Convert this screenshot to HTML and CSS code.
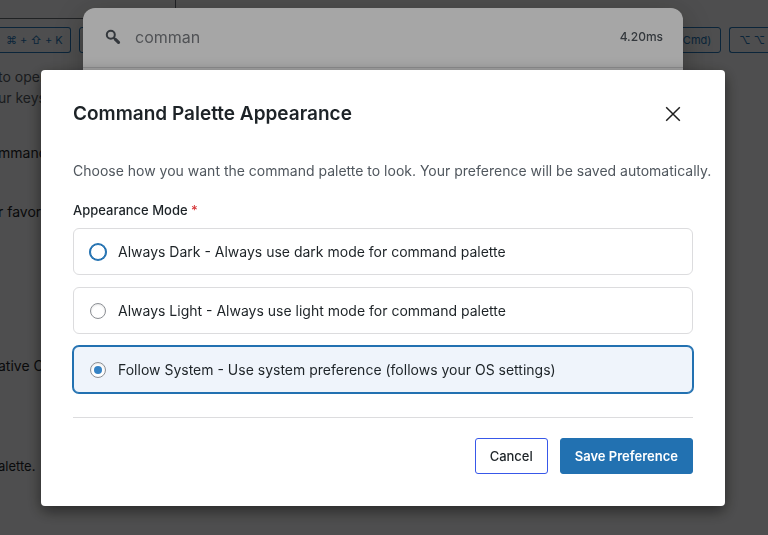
FILE: index.html
```html
<!DOCTYPE html>
<html lang="en">
<head>
    <meta charset="UTF-8">
    <meta name="viewport" content="width=device-width, initial-scale=1.0">
    <title>Command Palette Appearance</title>
    <link rel="stylesheet" href="styles.css">
</head>
<body>
    <main class="page">
        <div class="page-card"></div>
        <div class="shortcuts">
            <button type="button" class="shortcut shortcut-cut">⌘ + ⇧ + K</button>
            <button type="button" class="shortcut">⌘ K</button>
            <span class="spacer"></span>
            <button type="button" class="shortcut">(Cmd)</button>
            <button type="button" class="shortcut shortcut-last">⌥ ⌥ (</button>
        </div>
        <div class="page-text">
            <p class="intro">to open<br>ur keys</p>
            <p class="item">mmand</p>
            <p class="item">r favorit</p>
            <p class="item item-far">ative C</p>
            <p class="note">alette.</p>
        </div>
    </main>

    <div class="palette-overlay">
        <div class="palette">
            <div class="palette-search">
                <svg class="search-icon" viewBox="0 0 20 20" aria-hidden="true">
                    <circle cx="7.8" cy="7.8" r="4" fill="none" stroke="currentColor" stroke-width="2"/>
                    <path d="M10.5 10.5l2 2" stroke="currentColor" stroke-width="2"/>
                    <path d="M12.4 12.4l3.1 2.9" stroke="currentColor" stroke-width="3.2" stroke-linecap="round"/>
                </svg>
                <input type="text" class="palette-input" value="comman" aria-label="Search commands">
                <span class="palette-time">4.20ms</span>
            </div>
        </div>
    </div>

    <div class="modal-overlay">
        <form class="modal" role="dialog" aria-labelledby="modalTitle">
            <div class="modal-header">
                <h1 id="modalTitle">Command Palette Appearance</h1>
                <button type="button" class="close" aria-label="Close">
                    <svg viewBox="0 0 24 24" width="24" height="24">
                        <path d="M5.2 5.2l13.6 13.6M18.8 5.2L5.2 18.8" fill="none" stroke="currentColor" stroke-width="1.5"/>
                    </svg>
                </button>
            </div>
            <p class="description">Choose how you want the command palette to look. Your preference will be saved automatically.</p>
            <fieldset class="modes">
                <legend>Appearance Mode <span class="required">*</span></legend>
                <div class="options">
                    <label class="option">
                        <input type="radio" name="mode" value="dark" class="focused">
                        <span>Always Dark - Always use dark mode for command palette</span>
                    </label>
                    <label class="option">
                        <input type="radio" name="mode" value="light">
                        <span>Always Light - Always use light mode for command palette</span>
                    </label>
                    <label class="option selected">
                        <input type="radio" name="mode" value="system" checked>
                        <span>Follow System - Use system preference (follows your OS settings)</span>
                    </label>
                </div>
            </fieldset>
            <div class="actions">
                <button type="button" class="btn btn-cancel">Cancel</button>
                <button type="submit" class="btn btn-save">Save Preference</button>
            </div>
        </form>
    </div>
</body>
</html>
```
FILE: styles.css
```css
:root {
    --primary: #2271b1;
    --text: #1d2327;
    --muted: #50575e;
    --border: #dcdcde;
}

* {
    box-sizing: border-box;
}

body {
    margin: 0;
    height: 100vh;
    overflow: hidden;
    background: #f0f0f1;
    color: var(--text);
    font-family: Inter, sans-serif;
    font-size: 14px;
}

button, input {
    font-family: inherit;
}

/* settings page behind the overlays */
.page-card {
    width: 176px;
    height: 19px;
    border-right: 1px solid #646970;
    border-bottom: 1px solid #646970;
}

.shortcuts {
    display: flex;
    gap: 8px;
    margin-top: 8px;
    margin-right: -4px;
}

.spacer {
    flex: 1;
}

.shortcut {
    height: 26px;
    padding: 0 9px;
    border: 1px solid var(--primary);
    border-radius: 3px;
    background: transparent;
    color: var(--primary);
    font-size: 11px;
    white-space: nowrap;
}

.shortcut-cut {
    padding: 0 7px 0 6px;
    border-left: 0;
    border-radius: 0 3px 3px 0;
}

.shortcut-last {
    padding-right: 0;
    border-right: 0;
    border-radius: 3px 0 0 3px;
}

.page-text {
    margin-left: -2px;
}

.page-text p {
    margin: 0;
    white-space: nowrap;
}

.page-text .intro {
    margin-top: 13px;
    color: var(--muted);
    line-height: 21px;
}

.page-text .item {
    margin-top: 35px;
    line-height: 20px;
}

.page-text .item + .item {
    margin-top: 39px;
}

.page-text .item-far.item-far {
    margin-top: 134px;
}

.page-text .note {
    margin-top: 80px;
    font-size: 13px;
    line-height: 20px;
}

/* command palette */
.palette-overlay, .modal-overlay {
    position: fixed;
    inset: 0;
    display: flex;
    justify-content: center;
    align-items: flex-start;
}

.palette-overlay {
    padding: 8px 2px 0 0;
    background: rgba(0, 0, 0, 0.5);
}

.palette {
    width: 100%;
    max-width: 600px;
    height: 400px;
    background: #fff;
    border-radius: 12px;
    box-shadow: 0 8px 32px rgba(0, 0, 0, 0.3);
}

.palette-search {
    display: flex;
    align-items: center;
    gap: 12px;
    height: 60px;
    padding: 0 20px 2px;
    border-bottom: 1px solid var(--border);
}

.search-icon {
    width: 20px;
    height: 20px;
    color: var(--muted);
}

.palette-input {
    flex: 1;
    min-width: 0;
    padding: 0;
    border: 0;
    outline: none;
    background: transparent;
    color: #7c7f84;
    font-size: 16px;
}

.palette-time {
    color: var(--muted);
    font-size: 12px;
    font-weight: 500;
}

/* appearance modal */
.modal-overlay {
    padding: 70px 2px 0 0;
    background: rgba(0, 0, 0, 0.35);
}

.modal {
    width: 100%;
    max-width: 684px;
    padding: 32px;
    background: #fff;
    border-radius: 4px;
    box-shadow: 0 5px 15px rgba(0, 0, 0, 0.5);
}

.modal-header {
    display: flex;
    justify-content: space-between;
    align-items: center;
    height: 24px;
}

.modal-header h1 {
    margin: 0;
    font-size: 19px;
    font-weight: 600;
    line-height: 24px;
}

.close {
    display: flex;
    padding: 8px;
    border: 0;
    background: transparent;
    color: #1e1e1e;
    cursor: pointer;
}

.description {
    margin: 35px -20px 20px 0;
    color: var(--muted);
    line-height: 20px;
}

.modes {
    margin: 0;
    padding: 0;
    border: 0;
}

.modes legend {
    padding: 0;
    margin-bottom: 9px;
    font-size: 13px;
    font-weight: 500;
    line-height: 18px;
}

.required {
    color: #d63638;
}

.options {
    display: flex;
    flex-direction: column;
    gap: 12px;
}

.option {
    display: flex;
    align-items: center;
    gap: 12px;
    padding: 12px 16px;
    border: 1px solid var(--border);
    border-radius: 6px;
    line-height: 21px;
    cursor: pointer;
}

.option input {
    display: grid;
    place-items: center;
    appearance: none;
    flex: none;
    width: 16px;
    height: 16px;
    margin: 0;
    border: 1px solid #8c8f94;
    border-radius: 50%;
    background: #fff;
    box-shadow: inset 0 1px 2px rgba(0, 0, 0, 0.1);
}

.option input:checked::before {
    content: "";
    width: 8px;
    height: 8px;
    border-radius: 50%;
    background: #3582c4;
}

.option input.focused {
    border-color: var(--primary);
    box-shadow: 0 0 0 1px var(--primary);
}

.option.selected {
    border-color: var(--primary);
    background: #eff4fb;
    box-shadow: 0 0 0 1px var(--primary);
}

.actions {
    display: flex;
    justify-content: flex-end;
    gap: 12px;
    margin-top: 24px;
    padding-top: 20px;
    border-top: 1px solid var(--border);
}

.btn {
    height: 36px;
    padding: 0 14px;
    border: 1px solid var(--primary);
    border-radius: 3px;
    font-size: 13px;
    cursor: pointer;
}

.btn-cancel {
    border-color: #3858e9;
    background: #fff;
    color: var(--text);
    font-weight: 500;
}

.btn-save {
    background: var(--primary);
    color: #fff;
    font-weight: 600;
}
```
